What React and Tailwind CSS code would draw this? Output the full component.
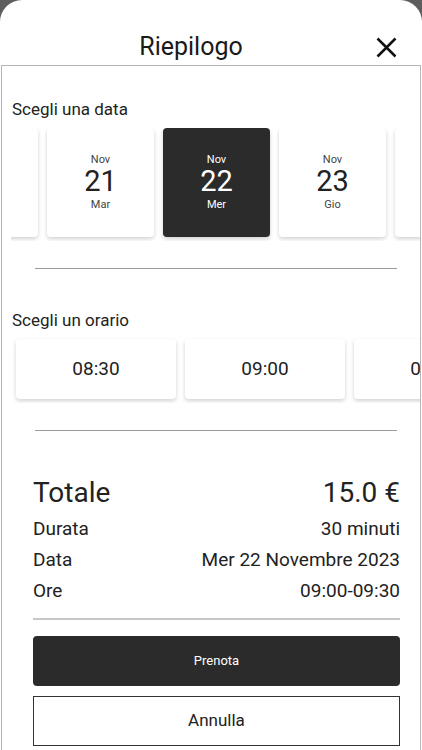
import React from "react";

const dates = [
  { m: "Nov", d: "20", w: "Lun" },
  { m: "Nov", d: "21", w: "Mar" },
  { m: "Nov", d: "22", w: "Mer", active: true },
  { m: "Nov", d: "23", w: "Gio" },
  { m: "Nov", d: "24", w: "Ven" },
];

const times = ["08:30", "09:00", "09:30"];

export default function App() {
  return (
    <div
      className="w-[422px] h-[750px] overflow-hidden bg-[#5e5e5e]"
      style={{ fontFamily: "Roboto, 'Liberation Sans', sans-serif" }}
    >
      <div className="h-full bg-white rounded-t-[22px] flex flex-col text-[#222]">
        {/* Header */}
        <div className="h-[65px] shrink-0 relative flex justify-center pr-[40px]">
          <span className="text-[25px] leading-[30px] mt-[32px] text-[#1a1a1a]">Riepilogo</span>
          <svg
            className="absolute left-[376px] top-[37px]"
            width="21"
            height="21"
            viewBox="0 0 21 21"
          >
            <path d="M1.5 1.5 L19.5 19.5 M19.5 1.5 L1.5 19.5" stroke="#111" strokeWidth="2.5" />
          </svg>
        </div>

        {/* Content */}
        <div className="flex-1 border-t border-x border-[#b5b5b5] mx-[1px] overflow-hidden">
          <div className="pl-[10px] pt-[32px] text-[17px] leading-[22px] text-[#222]">Scegli una data</div>

          <div className="ml-[9px] mt-[8px] overflow-hidden pb-[4px]">
            <div className="flex gap-[9px] -ml-[80px]">
              {dates.map((x) => (
                <div
                  key={x.d}
                  className={
                    "w-[107px] h-[109px] shrink-0 rounded-[4px] flex flex-col items-center pt-[25px] shadow-[0_2px_4px_rgba(0,0,0,0.18)] " +
                    (x.active ? "bg-[#2b2b2b] text-white" : "bg-white text-[#222]")
                  }
                >
                  <span className={"text-[11px] leading-[13px] " + (x.active ? "text-white" : "text-[#444]")}>{x.m}</span>
                  <span className="text-[29px] leading-[32px] -mt-[1px]">{x.d}</span>
                  <span className={"text-[11px] leading-[13px] mt-[1px] " + (x.active ? "text-white" : "text-[#444]")}>{x.w}</span>
                </div>
              ))}
            </div>
          </div>

          <div className="ml-[33px] mr-[23px] mt-[27px] h-px bg-[#9a9a9a]" />

          <div className="pl-[10px] pt-[40px] text-[17px] leading-[22px] text-[#222]">Scegli un orario</div>

          <div className="ml-[9px] mt-[7px] overflow-hidden pb-[4px] pt-[1px]">
            <div className="flex gap-[9px] pl-[5px]">
              {times.map((t) => (
                <div
                  key={t}
                  className="w-[160px] h-[60px] shrink-0 rounded-[4px] bg-white flex items-center justify-center text-[19px] shadow-[0_2px_4px_rgba(0,0,0,0.18)]"
                >
                  {t}
                </div>
              ))}
            </div>
          </div>

          <div className="ml-[33px] mr-[23px] mt-[27px] h-px bg-[#9a9a9a]" />

          <div className="pl-[31px] pr-[20px] pt-[45px]">
            <div className="flex justify-between items-center text-[28px] leading-[34px]">
              <span>Totale</span>
              <span>15.0 €</span>
            </div>
            <div className="flex justify-between items-center text-[19px] leading-[31px] mt-[3px]">
              <span>Durata</span>
              <span>30 minuti</span>
            </div>
            <div className="flex justify-between items-center text-[19px] leading-[31px]">
              <span>Data</span>
              <span>Mer 22 Novembre 2023</span>
            </div>
            <div className="flex justify-between items-center text-[19px] leading-[31px]">
              <span>Ore</span>
              <span>09:00-09:30</span>
            </div>
            <div className="mt-[12px] h-[2px] bg-[#c8c8c8]" />

            <button className="mt-[16px] w-full h-[50px] rounded-[4px] bg-[#2b2b2b] text-white text-[13px]">
              Prenota
            </button>
            <button className="mt-[10px] w-full h-[50px] border border-[#333] bg-white text-[17px] text-[#222]">
              Annulla
            </button>
          </div>
        </div>
      </div>
    </div>
  );
}
